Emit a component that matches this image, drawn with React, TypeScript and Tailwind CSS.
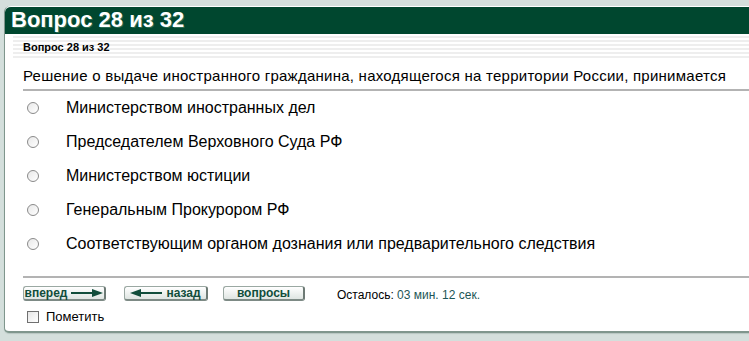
import { useState } from "react";

const options = [
  "Министерством иностранных дел",
  "Председателем Верховного Суда РФ",
  "Министерством юстиции",
  "Генеральным Прокурором РФ",
  "Соответствующим органом дознания или предварительного следствия",
];

function Arrow({ dir }: { dir: "left" | "right" }) {
  return (
    <svg width="32" height="8" viewBox="0 0 32 8" className={dir === "left" ? "rotate-180" : ""}>
      <rect x="0" y="3" width="24" height="2" fill="#114d3b" />
      <path d="M21 0 L32 4 L21 8 Z" fill="#114d3b" />
    </svg>
  );
}

function NavButton({ children, width }: { children: React.ReactNode; width: string }) {
  return (
    <button
      className={`${width} flex h-[15px] items-center justify-center gap-[4px] rounded-[3px] border border-[#9aa8a2] border-r-[2px] border-b-[2px] border-r-[#6d7a75] border-b-[#7d8a85] bg-gradient-to-b from-white to-[#dfe5e2] text-[12px] font-bold leading-none text-[#114d3b]`}
    >
      {children}
    </button>
  );
}

export default function App() {
  const [answer, setAnswer] = useState<number | null>(null);
  const [marked, setMarked] = useState(false);

  return (
    <div className="h-[341px] w-[749px] overflow-hidden bg-[#d4dfdc] pl-[4px] pt-[6px] font-['Liberation_Sans',Arial,sans-serif] text-black">
      <div className="h-[327px] rounded-tl-[6px] rounded-bl-[5px] border-b-2 border-l border-[#7f968d] bg-white shadow-[0_1px_1px_#b7c6c1]">
        <div className="h-[28px] rounded-tl-[6px] border-t border-white bg-[#00472f] pl-[6px] text-[22px] font-bold leading-[26px] text-white [text-shadow:1px_1px_0_#2a6a52]">
          Вопрос 28 из 32
        </div>
        <div className="ml-[8px] h-[24px] bg-[repeating-linear-gradient(180deg,#ffffff_0px,#ffffff_2px,#eeeeee_2px,#eeeeee_4px)] pl-[10px] pt-[7px] text-[11px] font-bold leading-[12px]">
          Вопрос 28 из 32
        </div>
        <div className="pl-[18px]">
          <div className="mt-[9px] whitespace-nowrap text-[15px] leading-[18px] tracking-[0.25px]">
            Решение о выдаче иностранного гражданина, находящегося на территории России, принимается
          </div>
          <div className="mt-[4px] h-[2px] bg-[#b3b3b3]" />
          <div>
            {options.map((o, i) => (
              <label key={i} className="flex h-[34px] cursor-pointer items-center">
                <span
                  onClick={() => setAnswer(i)}
                  className="ml-[4px] flex h-[12px] w-[12px] items-center justify-center rounded-full border border-[#8a8a8a] bg-gradient-to-br from-[#e8e8e8] to-white"
                >
                  {answer === i && <span className="h-[4px] w-[4px] rounded-full bg-black" />}
                </span>
                <span className="ml-[27px] text-[16px] leading-[18px]">{o}</span>
              </label>
            ))}
          </div>
          <div className="mt-[15px] h-[2px] bg-[#b3b3b3]" />
          <div className="mt-[5px] flex items-center">
            <NavButton width="w-[83px]">
              вперед <Arrow dir="right" />
            </NavButton>
            <div className="ml-[18px]">
              <NavButton width="w-[84px]">
                <Arrow dir="left" /> назад
              </NavButton>
            </div>
            <div className="ml-[15px]">
              <NavButton width="w-[82px]">вопросы</NavButton>
            </div>
            <div className="ml-[32px] mt-[3px] text-[12px]">
              Осталось: <span className="text-[#1d5656]">03 мин. 12 сек.</span>
            </div>
          </div>
          <label className="mt-[3px] flex items-center" onClick={() => setMarked(!marked)}>
            <span className="ml-[4px] flex h-[12px] w-[12px] items-center justify-center border border-[#707070] bg-gradient-to-br from-[#e6e6e6] to-white text-[9px] leading-none">
              {marked ? "✓" : ""}
            </span>
            <span className="ml-[7px] text-[13px]">Пометить</span>
          </label>
        </div>
      </div>
    </div>
  );
}
